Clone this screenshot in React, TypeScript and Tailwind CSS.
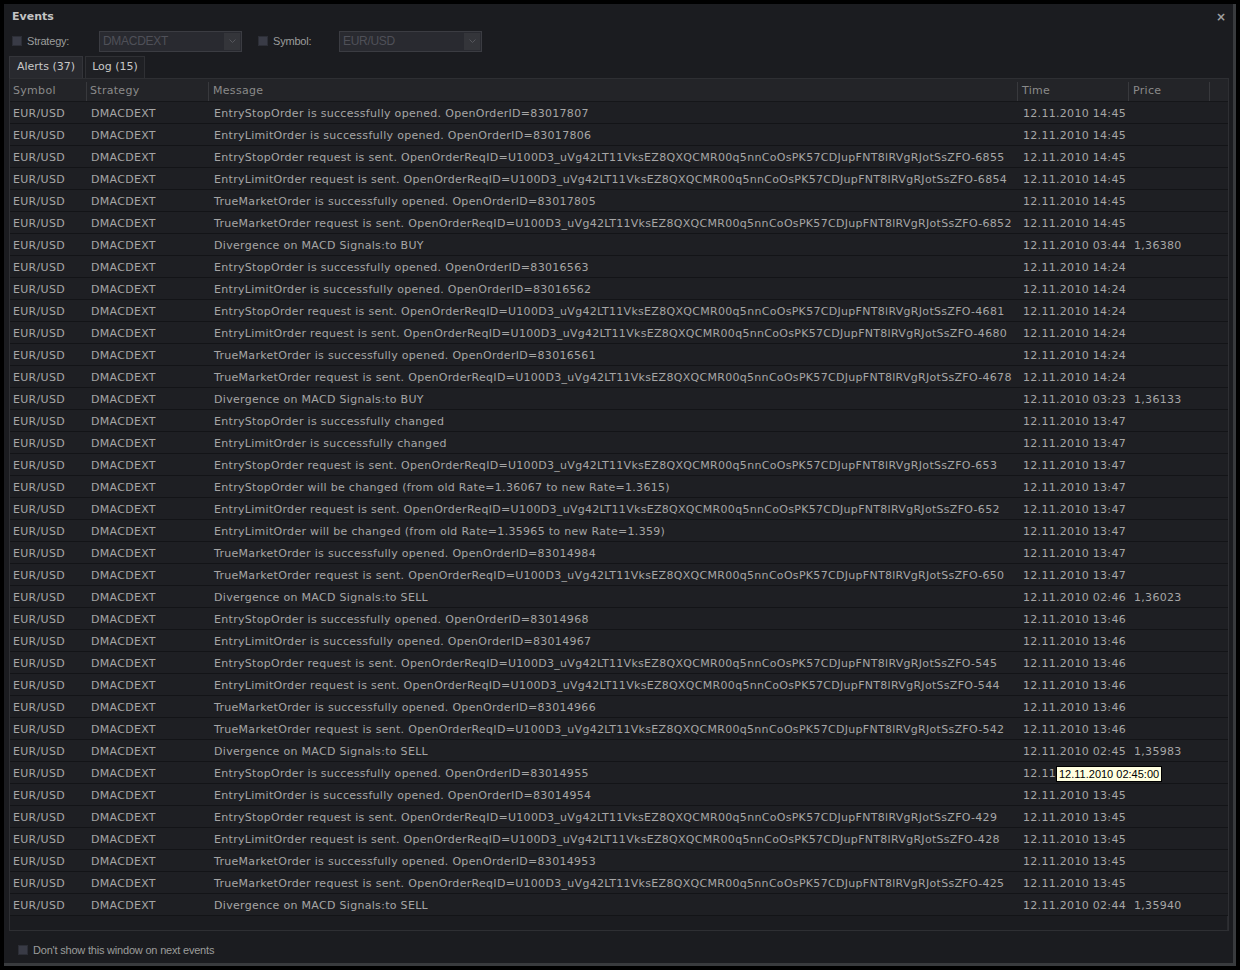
import React from "react";

const REQ = "OpenOrderReqID=U100D3_uVg42LT11VksEZ8QXQCMR00q5nnCoOsPK57CDJupFNT8lRVgRJotSsZFO-";

type Row = { msg: string; time: string; price?: string; tip?: string };

const rows: Row[] = [
  { msg: "EntryStopOrder is successfully opened. OpenOrderID=83017807", time: "12.11.2010 14:45" },
  { msg: "EntryLimitOrder is successfully opened. OpenOrderID=83017806", time: "12.11.2010 14:45" },
  { msg: `EntryStopOrder request is sent. ${REQ}6855`, time: "12.11.2010 14:45" },
  { msg: `EntryLimitOrder request is sent. ${REQ}6854`, time: "12.11.2010 14:45" },
  { msg: "TrueMarketOrder is successfully opened. OpenOrderID=83017805", time: "12.11.2010 14:45" },
  { msg: `TrueMarketOrder request is sent. ${REQ}6852`, time: "12.11.2010 14:45" },
  { msg: "Divergence on MACD Signals:to BUY", time: "12.11.2010 03:44", price: "1,36380" },
  { msg: "EntryStopOrder is successfully opened. OpenOrderID=83016563", time: "12.11.2010 14:24" },
  { msg: "EntryLimitOrder is successfully opened. OpenOrderID=83016562", time: "12.11.2010 14:24" },
  { msg: `EntryStopOrder request is sent. ${REQ}4681`, time: "12.11.2010 14:24" },
  { msg: `EntryLimitOrder request is sent. ${REQ}4680`, time: "12.11.2010 14:24" },
  { msg: "TrueMarketOrder is successfully opened. OpenOrderID=83016561", time: "12.11.2010 14:24" },
  { msg: `TrueMarketOrder request is sent. ${REQ}4678`, time: "12.11.2010 14:24" },
  { msg: "Divergence on MACD Signals:to BUY", time: "12.11.2010 03:23", price: "1,36133" },
  { msg: "EntryStopOrder is successfully changed", time: "12.11.2010 13:47" },
  { msg: "EntryLimitOrder is successfully changed", time: "12.11.2010 13:47" },
  { msg: `EntryStopOrder request is sent. ${REQ}653`, time: "12.11.2010 13:47" },
  { msg: "EntryStopOrder will be changed (from old Rate=1.36067 to new Rate=1.3615)", time: "12.11.2010 13:47" },
  { msg: `EntryLimitOrder request is sent. ${REQ}652`, time: "12.11.2010 13:47" },
  { msg: "EntryLimitOrder will be changed (from old Rate=1.35965 to new Rate=1.359)", time: "12.11.2010 13:47" },
  { msg: "TrueMarketOrder is successfully opened. OpenOrderID=83014984", time: "12.11.2010 13:47" },
  { msg: `TrueMarketOrder request is sent. ${REQ}650`, time: "12.11.2010 13:47" },
  { msg: "Divergence on MACD Signals:to SELL", time: "12.11.2010 02:46", price: "1,36023" },
  { msg: "EntryStopOrder is successfully opened. OpenOrderID=83014968", time: "12.11.2010 13:46" },
  { msg: "EntryLimitOrder is successfully opened. OpenOrderID=83014967", time: "12.11.2010 13:46" },
  { msg: `EntryStopOrder request is sent. ${REQ}545`, time: "12.11.2010 13:46" },
  { msg: `EntryLimitOrder request is sent. ${REQ}544`, time: "12.11.2010 13:46" },
  { msg: "TrueMarketOrder is successfully opened. OpenOrderID=83014966", time: "12.11.2010 13:46" },
  { msg: `TrueMarketOrder request is sent. ${REQ}542`, time: "12.11.2010 13:46" },
  { msg: "Divergence on MACD Signals:to SELL", time: "12.11.2010 02:45", price: "1,35983" },
  { msg: "EntryStopOrder is successfully opened. OpenOrderID=83014955", time: "12.11", tip: "12.11.2010 02:45:00" },
  { msg: "EntryLimitOrder is successfully opened. OpenOrderID=83014954", time: "12.11.2010 13:45" },
  { msg: `EntryStopOrder request is sent. ${REQ}429`, time: "12.11.2010 13:45" },
  { msg: `EntryLimitOrder request is sent. ${REQ}428`, time: "12.11.2010 13:45" },
  { msg: "TrueMarketOrder is successfully opened. OpenOrderID=83014953", time: "12.11.2010 13:45" },
  { msg: `TrueMarketOrder request is sent. ${REQ}425`, time: "12.11.2010 13:45" },
  { msg: "Divergence on MACD Signals:to SELL", time: "12.11.2010 02:44", price: "1,35940" },
];

const cols = "grid grid-cols-[77px_122px_809px_111px_81px_1fr]";

function Check({ className = "" }: { className?: string }) {
  return <span className={`block w-[10px] h-[10px] bg-[#393b46] border border-[#2c2e36] ${className}`} />;
}

function Dropdown({ value }: { value: string }) {
  return (
    <div className="flex items-center w-[143px] h-[21px] bg-[#292a30] border border-[#3b3c42]">
      <span className="flex-1 pl-[3px] text-[12px] tracking-[-0.3px] text-[#4f5058] font-['Liberation_Sans',sans-serif]">{value}</span>
      <span className="flex items-center justify-center w-[16px] h-[17px] mr-[1px] bg-[#34353a]">
        <svg width="7" height="4" viewBox="0 0 7 4">
          <path d="M0.5 0.5 L3.5 3.5 L6.5 0.5" fill="none" stroke="#55565c" strokeWidth="1" />
        </svg>
      </span>
    </div>
  );
}

export default function App() {
  return (
    <div className="w-[1240px] h-[970px] bg-black pt-[4px] pl-[4px] font-['DejaVu_Sans',sans-serif]">
      <div className="flex flex-col w-[1232px] h-[962px] bg-[#1b1c20] border-r-[3px] border-b-[3px] border-[#393b3e]">
        <div className="flex items-center justify-between h-[26px] pl-[8px] pr-[7px]">
          <span className="text-[11px] font-bold text-[#c4c4c4]">Events</span>
          <span className="text-[12px] font-bold text-[#a0a0a0] leading-none">×</span>
        </div>

        <div className="flex items-center h-[23px] pl-[8px] text-[11px] text-[#9c9c9c] font-['Liberation_Sans',sans-serif] tracking-[-0.2px]">
          <Check />
          <span className="ml-[5px] w-[72px]">Strategy:</span>
          <Dropdown value="DMACDEXT" />
          <Check className="ml-[16px]" />
          <span className="ml-[5px] w-[66px]">Symbol:</span>
          <Dropdown value="EUR/USD" />
        </div>

        <div className="flex items-end h-[25px] pl-[5px] pt-[3px] text-[11px] text-[#c8c8c8]">
          <div className="h-[22px] w-[74px] flex items-center justify-center bg-[#28292e] border border-b-0 border-[#34353a]">Alerts (37)</div>
          <div className="h-[22px] w-[60px] ml-[2px] flex items-center justify-center bg-[#1f2024] border border-b-0 border-[#2f3034]">Log (15)</div>
        </div>

        <div className="ml-[5px] w-[1220px] h-[856px] flex flex-col bg-[#1b1c20] border border-[#2e2f33] text-[11px] tracking-[0.3px]">
          <div className={`${cols} h-[23px] pt-[3px] bg-[#232428] border-b border-[#151619] text-[#8a8a8a]`}>
            {["Symbol", "Strategy", "Message", "Time", "Price", ""].map((h, i) => (
              <div key={i} className={`flex items-center ${i < 5 ? "border-r border-[#38393d]" : ""} ${i > 1 ? "pl-[4px]" : "pl-[3px]"}`}>
                {h}
              </div>
            ))}
          </div>
          {rows.map((r, i) => (
            <div key={i} className={`${cols} h-[22px] pt-[3px] bg-[#1e1f23] border-b border-[#131417] text-[#a6a6a6] whitespace-nowrap`}>
              <div className="flex items-center pl-[3px]">EUR/USD</div>
              <div className="flex items-center pl-[4px]">DMACDEXT</div>
              <div className="flex items-center pl-[5px] overflow-hidden">{r.msg}</div>
              <div className="relative flex items-center pl-[5px]">
                {r.time}
                {r.tip && (
                  <span className="absolute left-[38px] top-[1px] h-[16px] px-[2px] flex items-center bg-[#ffffe1] border border-black text-black text-[11px] tracking-[0px] font-['Liberation_Sans',sans-serif]">
                    {r.tip}
                  </span>
                )}
              </div>
              <div className="flex items-center pl-[5px]">{r.price ?? ""}</div>
              <div />
            </div>
          ))}
          <div className="flex-1 flex">
            <div className="flex-1" />
            <div className="w-[1px] bg-[#2a2b2f]" />
          </div>
        </div>

        <div className="flex items-center h-[32px] pl-[14px] pt-[6px] text-[11px] text-[#9c9c9c] font-['Liberation_Sans',sans-serif] tracking-[-0.2px]">
          <Check />
          <span className="ml-[5px]">Don't show this window on next events</span>
        </div>
      </div>
    </div>
  );
}
